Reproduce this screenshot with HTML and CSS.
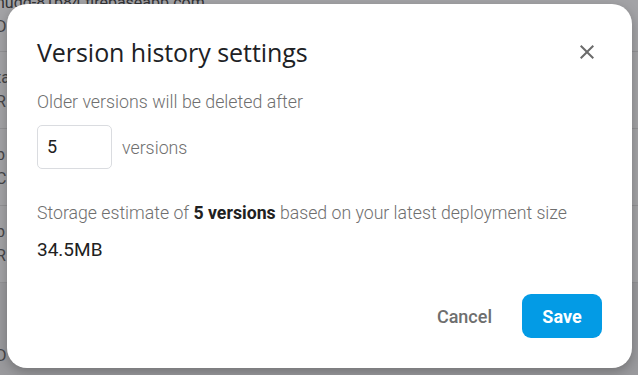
FILE: index.html
```html
<!DOCTYPE html>
<html>
<head>
<meta charset="utf-8">
<link rel="stylesheet" href="styles.css">
</head>
<body>
<div class="page">
  <div class="row row-first"><span class="cell">nudd-81b84.firebaseapp.com</span><span class="cell">D</span></div>
  <div class="row"><span class="cell">ta</span><span class="cell">R</span></div>
  <div class="row"><span class="cell">b</span><span class="cell">C</span></div>
  <div class="row"><span class="cell">b</span><span class="cell">R</span></div>
  <div class="row row-dark"><span class="cell cell-low">D</span></div>
</div>
<div class="overlay">
  <div class="dialog">
    <div class="header">
      <h1 class="title">Version history settings</h1>
      <button class="close" aria-label="Close">
        <svg width="24" height="24" viewBox="0 0 24 24"><path d="M19 6.41L17.59 5 12 10.59 6.41 5 5 6.41 10.59 12 5 17.59 6.41 19 12 13.41 17.59 19 19 17.59 13.41 12z" fill="#6b6b6b"/></svg>
      </button>
    </div>
    <p class="label">Older versions will be deleted after</p>
    <div class="field-row">
      <div class="input">5</div>
      <span class="unit">versions</span>
    </div>
    <p class="estimate">Storage estimate of <b>5 versions</b> based on your latest deployment size</p>
    <p class="size">34.5MB</p>
    <div class="actions">
      <button class="btn-cancel">Cancel</button>
      <button class="btn-save">Save</button>
    </div>
  </div>
</div>
</body>
</html>
```

FILE: styles.css
```css
html, body {
  margin: 0;
  padding: 0;
}
body {
  width: 638px;
  height: 375px;
  overflow: hidden;
  position: relative;
  font-family: Roboto, "Liberation Sans", sans-serif;
  background: #fff;
}
.page {
  display: flex;
  flex-direction: column;
  height: 375px;
}
.row {
  height: 76px;
  border-bottom: 1px solid #e0e0e0;
  display: flex;
  flex-direction: column;
  justify-content: center;
  gap: 6px;
  color: #555;
  font-size: 16px;
  flex: none;
}
.row-first {
  height: 51px;
  justify-content: flex-start;
}
.row-first .cell:first-child {
  margin-top: -6px;
  color: #333;
}
.row-dark {
  flex: 1;
  background: #eeeeee;
  border-bottom: none;
  justify-content: flex-end;
  padding-bottom: 10px;
}
.cell {
  line-height: 18px;
  margin-left: -4px;
}
.overlay {
  position: absolute;
  inset: 0;
  background: rgba(50, 52, 58, 0.45);
  display: flex;
  padding: 4px 6px 7px 7px;
}
.dialog {
  flex: 1;
  background: #fff;
  border-radius: 20px;
  padding: 0 30px;
  box-shadow: 0 4px 12px rgba(0,0,0,0.25);
  display: flex;
  flex-direction: column;
}
.header {
  display: flex;
  align-items: center;
  justify-content: space-between;
  padding-top: 31px;
  height: 34px;
}
.title {
  margin: 0;
  font-family: "Open Sans", Roboto, sans-serif;
  font-weight: 400;
  font-size: 25px;
  letter-spacing: -0.05px;
  color: #202124;
  line-height: 34px;
}
.close {
  border: none;
  background: none;
  padding: 0;
  margin-right: 3px;
  width: 24px;
  height: 24px;
  display: flex;
  align-items: center;
  justify-content: center;
}
.label {
  margin: 22px 0 0;
  font-size: 17.8px;
  font-weight: 300;
  line-height: 22px;
  color: #6f6f6f;
}
.field-row {
  display: flex;
  align-items: center;
  margin-top: 12px;
  gap: 10px;
}
.input {
  width: 64px;
  height: 42px;
  border: 1px solid #dadce0;
  border-radius: 5px;
  font-size: 18px;
  color: #212121;
  line-height: 42px;
  padding-left: 9px;
}
.unit {
  font-size: 17.8px;
  font-weight: 300;
  color: #6f6f6f;
}
.estimate {
  margin: 33px 0 0;
  font-size: 17.7px;
  font-weight: 300;
  line-height: 22px;
  color: #6f6f6f;
}
.estimate b {
  color: #212121;
  font-weight: 700;
}
.size {
  margin: 15px 0 0;
  font-size: 19px;
  line-height: 22px;
  color: #212121;
  font-weight: 400;
}
.actions {
  margin-top: auto;
  margin-bottom: 30px;
  display: flex;
  justify-content: flex-end;
  align-items: center;
  gap: 30px;
}
.btn-cancel {
  border: none;
  background: none;
  padding: 0;
  font-family: Roboto, sans-serif;
  font-size: 18px;
  font-weight: 500;
  color: #6e6e6e;
}
.btn-save {
  border: none;
  background: #039be5;
  color: #fff;
  font-family: Roboto, sans-serif;
  font-size: 18px;
  font-weight: 700;
  width: 80px;
  height: 44px;
  border-radius: 9px;
}
```
